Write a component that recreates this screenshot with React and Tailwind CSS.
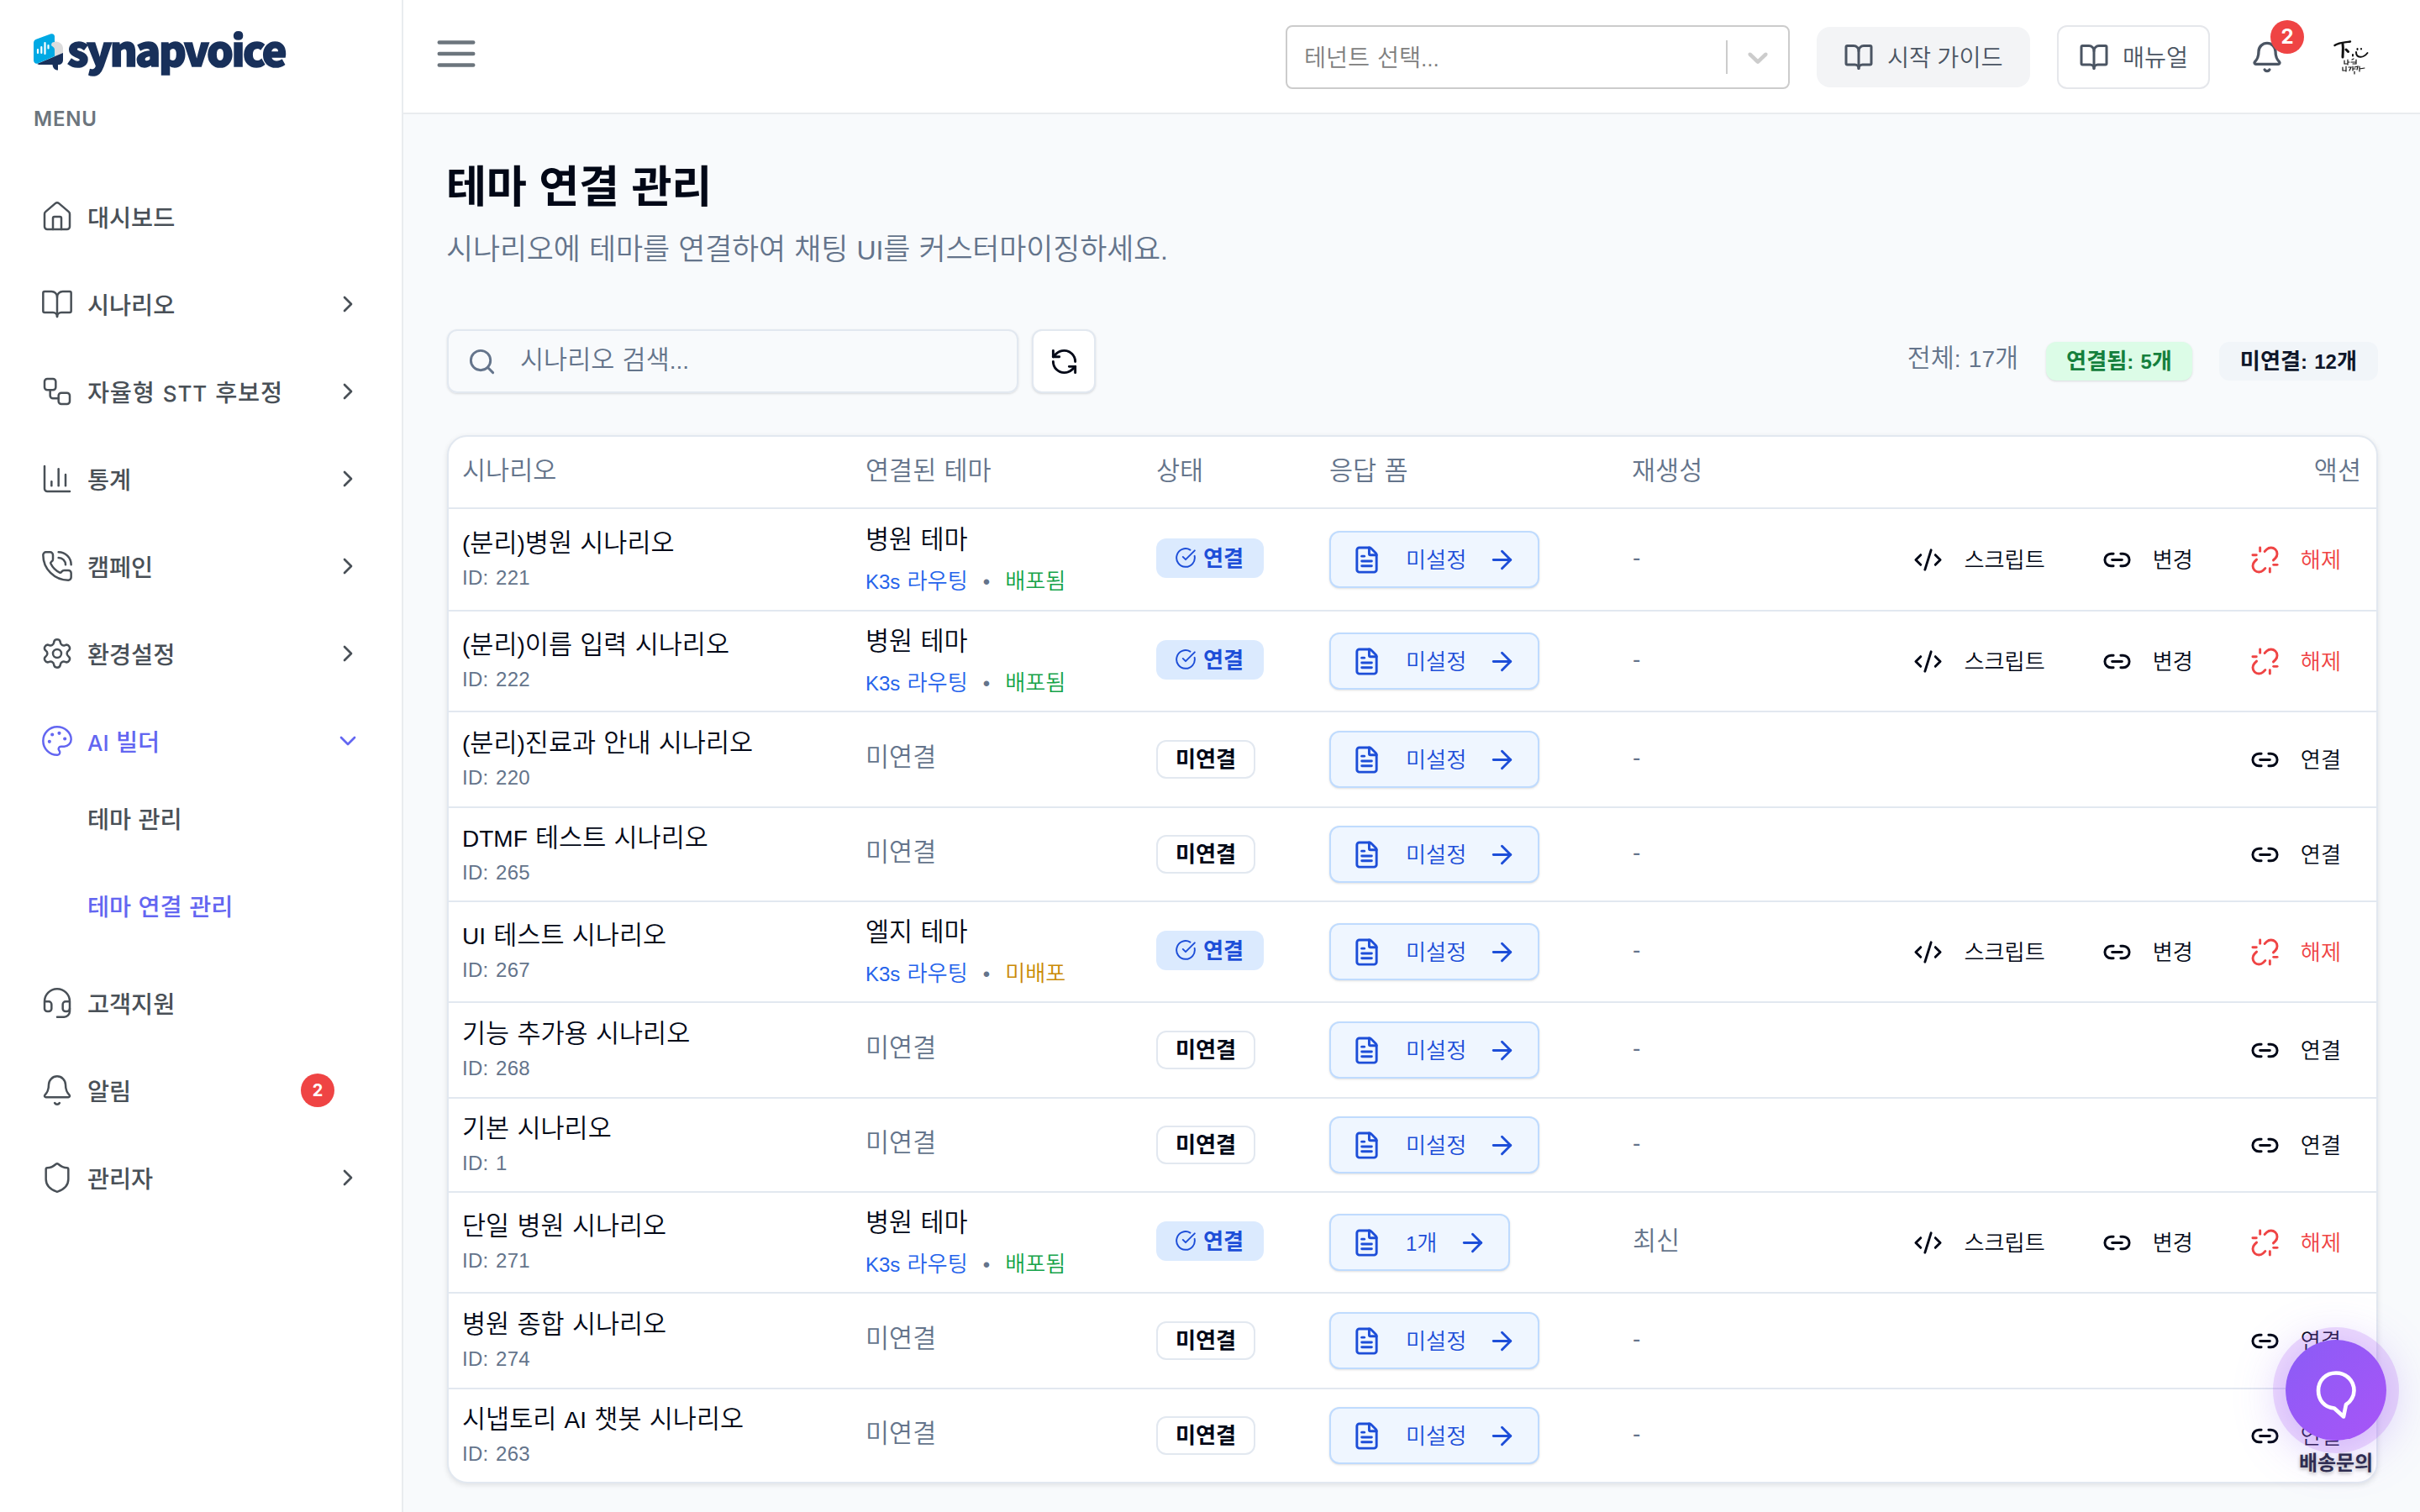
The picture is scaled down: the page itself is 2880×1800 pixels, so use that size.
import {
  ArrowRight,
  Bell,
  BookOpen,
  ChartColumn,
  ChevronDown,
  ChevronRight,
  CircleCheckBig,
  CodeXml,
  FileText,
  Headset,
  House,
  Link2,
  Palette,
  PhoneCall,
  RefreshCcw,
  Search,
  Settings,
  Shield,
  Unlink,
  Workflow,
} from "lucide-react";

const menuItems = [
  { label: "대시보드", icon: House },
  { label: "시나리오", icon: BookOpen, arrow: true },
  { label: "자율형 STT 후보정", icon: Workflow, arrow: true, spaced: true },
  { label: "통계", icon: ChartColumn, arrow: true },
  { label: "캠페인", icon: PhoneCall, arrow: true },
  { label: "환경설정", icon: Settings, arrow: true },
  { label: "AI 빌더", icon: Palette, open: true, children: ["테마 관리", "테마 연결 관리"] },
  { label: "고객지원", icon: Headset },
  { label: "알림", icon: Bell, badge: 2 },
  { label: "관리자", icon: Shield, arrow: true },
];

const rows = [
  { id: 221, name: "(분리)병원 시나리오", theme: "병원 테마", deployed: true, form: "미설정", regen: "-", height: "h-[122px]" },
  { id: 222, name: "(분리)이름 입력 시나리오", theme: "병원 테마", deployed: true, form: "미설정", regen: "-", height: "h-[120px]" },
  { id: 220, name: "(분리)진료과 안내 시나리오", form: "미설정", regen: "-", height: "h-[114px]" },
  { id: 265, name: "DTMF 테스트 시나리오", form: "미설정", regen: "-", height: "h-[112px]" },
  { id: 267, name: "UI 테스트 시나리오", theme: "엘지 테마", deployed: false, form: "미설정", regen: "-", height: "h-[120px]" },
  { id: 268, name: "기능 추가용 시나리오", form: "미설정", regen: "-", height: "h-[114px]" },
  { id: 1, name: "기본 시나리오", form: "미설정", regen: "-", height: "h-[112px]" },
  { id: 271, name: "단일 병원 시나리오", theme: "병원 테마", deployed: true, form: "1개", regen: "최신", height: "h-[120px]" },
  { id: 274, name: "병원 종합 시나리오", form: "미설정", regen: "-", height: "h-[114px]" },
  { id: 263, name: "시냅토리 AI 챗봇 시나리오", form: "미설정", regen: "-", height: "h-[110px]" },
];

const columns = "grid grid-cols-[480px_346px_206px_360px_200px_1fr] px-4";

function Ko({ children }) {
  return String(children)
    .split(/([가-힣]+)/)
    .map((part, i) =>
      i % 2 ? (
        <span key={i} className="text-[1.09em] leading-none">
          {part}
        </span>
      ) : (
        part
      )
    );
}

function Logo() {
  return (
    <div className="flex h-[44px] items-center">
      <svg width="36" height="44" viewBox="0 0 36 44" className="shrink-0">
        <path d="M21 11c3-3 14-2 14 7v7L24 28z" fill="#dcdcdd" />
        <path d="M4 36 35 23v8c0 4-2 6-6 6v6.5c-4 0-6-2.500-6.500-6.500H8c-2 0-3-.5-4-1z" fill="#18305a" />
        <path d="M0 11c0-2 1-3.500 3-4.300L20 .5c3-1 5 .5 5 3V10c-3 0-4.500 2-3.500 4.500 1 1 3.500 2 3.500 5V27L5 35.500c-3 .8-5-1-5-4z" fill="#00a9e4" />
        <path d="M5 19v4M9.300 16v7M13.500 11v13M17.500 14v3.500" stroke="#fff" strokeWidth="2.200" strokeLinecap="round" />
      </svg>
      <span className="-mt-[11px] ml-[4px] font-['Noto_Sans_CJK_KR','Noto_Sans',sans-serif] text-[50px] leading-[44px] font-black tracking-[-2.5px] text-[#18305a] [-webkit-text-stroke:1.6px_#18305a]">
        synapvoice
      </span>
    </div>
  );
}

function Sidebar() {
  return (
    <aside className="flex w-[480px] shrink-0 flex-col border-r-2 border-[#e9ecef] bg-white px-10 pt-10 font-['Inter','Noto_Sans_CJK_KR',sans-serif]">
      <Logo />
      <p className="mt-[44px] text-2xl leading-7 font-semibold tracking-[0.8px] text-[#6c757d]">MENU</p>
      <nav className="mt-[50px] flex flex-col text-[26px] font-medium text-[#495057]">
        {menuItems.map((item) => (
          <div key={item.label}>
            <div className={`flex h-[104px] items-center px-2 ${item.open ? "text-[#6366f1]" : ""}`}>
              <item.icon size={40} strokeWidth={1.5} />
              <span className={`ml-4 flex-1 pt-1 ${item.spaced ? "tracking-[0.8px]" : ""}`}>
                <Ko>{item.label}</Ko>
              </span>
              {item.badge && (
                <span className="mr-8 flex size-10 items-center justify-center rounded-full bg-[#ef4444] text-xl font-bold text-white">
                  {item.badge}
                </span>
              )}
              {item.arrow && <ChevronRight size={32} />}
              {item.open && <ChevronDown size={32} />}
            </div>
            {item.children && (
              <div className="-mt-[11px] mb-[11px] flex flex-col pl-16">
                {item.children.map((child, i) => (
                  <div key={child} className={`flex h-[104px] items-center pt-0.5 ${i === 1 ? "text-[#6366f1]" : ""}`}>
                    <span>
                      <Ko>{child}</Ko>
                    </span>
                  </div>
                ))}
              </div>
            )}
          </div>
        ))}
      </nav>
    </aside>
  );
}

function Avatar() {
  return (
    <svg width="72" height="64" viewBox="0 0 72 64" fill="none" stroke="#111" strokeLinecap="round" className="shrink-0">
      <path d="M14.500 19C20 15 27 15.500 33 14.500" strokeWidth="2.400" />
      <path d="M24 17c1 6 0 11 0 16" strokeWidth="3" />
      <path d="m28 24 2.500 2.500" strokeWidth="3" />
      <path d="M36 30v1.500M40 27c0 7 8 8 13.500 1M41.500 23v1M46 23v.5" strokeWidth="2" />
      <path d="M26 37v4h3M30 36v6M30 39h2M35 36l2-1M34 39h5M36 41h3M40 36v5" strokeWidth="1.200" />
      <path d="M24 45v4h3M28 44v6M31 45l3 0-2 4M36 44v5M36 47h3M38 45l4-1-1 4M44 44v6M44 47l6-1M38 50v3" strokeWidth="1.200" />
    </svg>
  );
}

function Header() {
  return (
    <header className="flex h-[136px] shrink-0 items-center border-b-2 border-[#e9ecef] bg-white pr-[44px] pl-[36px] text-[26px] text-[#4b5563]">
      <svg width="54" height="54" viewBox="0 0 24 24" stroke="#6c757d" strokeWidth="2" strokeLinecap="round" className="-mt-[7px]">
        <path d="M3 6h18M3 12h18M3 18h18" />
      </svg>
      <div className="mt-0.5 ml-auto flex h-[76px] w-[600px] items-center rounded-lg border-2 border-[#ccc] bg-white pl-5 text-[#808080]">
        <span className="flex-1 pt-1">
          <Ko>테넌트 선택...</Ko>
        </span>
        <span className="h-10 w-0.5 bg-[#ccc]" />
        <svg width="40" height="40" viewBox="0 0 20 20" fill="#ccc" className="mx-4">
          <path d="M4.516 7.548c0.436-0.446 1.043-0.481 1.576 0l3.908 3.747 3.908-3.747c0.533-0.481 1.141-0.446 1.574 0 0.436 0.445 0.408 1.197 0 1.615-0.406 0.418-4.695 4.502-4.695 4.502-0.217 0.223-0.502 0.335-0.787 0.335s-0.570-0.112-0.789-0.335c0 0-4.287-4.084-4.695-4.502s-0.436-1.170 0-1.615z" />
        </svg>
      </div>
      <button className="mt-0.5 ml-8 flex h-[72px] w-[254px] items-center gap-4 rounded-2xl bg-[#f3f4f6] pl-8">
        <BookOpen size={36} />
        <span className="pt-1">
          <Ko>시작 가이드</Ko>
        </span>
      </button>
      <button className="mt-0.5 ml-8 flex h-[76px] w-[182px] items-center gap-4 rounded-xl border-2 border-[#e5e7eb] bg-white pl-6">
        <BookOpen size={36} />
        <span className="pt-1">
          <Ko>매뉴얼</Ko>
        </span>
      </button>
      <div className="relative mt-0.5 mr-[46px] ml-12">
        <Bell size={40} />
        <span className="absolute -top-6 left-6 flex size-10 items-center justify-center rounded-full bg-[#ef4444] font-['Inter'] text-2xl font-bold text-white">
          2
        </span>
      </div>
      <Avatar />
    </header>
  );
}

function StatusBadge({ linked }) {
  if (linked) {
    return (
      <span className="-mt-1 flex h-[47px] w-[128px] items-center gap-2 rounded-xl bg-[#dbeafe] pl-[22px] text-2xl font-bold text-[#1d4ed8]">
        <CircleCheckBig size={26} strokeWidth={1.8} />
        <span className="pt-[3px]">
          <Ko>연결</Ko>
        </span>
      </span>
    );
  }
  return (
    <span className="-mt-px flex h-[46px] w-[118px] items-center justify-center rounded-xl border-2 border-[#e2e8f0] pt-0.5 text-2xl font-bold">
      <span>
        <Ko>미연결</Ko>
      </span>
    </span>
  );
}

function FormButton({ label }) {
  return (
    <button className="flex h-[68px] items-center rounded-xl border-2 border-[#bfdbfe] bg-[#eff6ff] px-[25px] text-2xl text-[#1d4ed8] shadow-sm">
      <FileText size={35} />
      <span className="mr-[25px] ml-[29px] pt-1">
        <Ko>{label}</Ko>
      </span>
      <ArrowRight size={35} />
    </button>
  );
}

function ActionButton({ icon: Icon, label, danger }) {
  return (
    <button className={`flex items-center gap-[25px] px-[26px] text-2xl ${danger ? "text-[#ef4444]" : ""}`}>
      <Icon size={35} />
      <span className="pt-1">
        <Ko>{label}</Ko>
      </span>
    </button>
  );
}

function ScenarioRow({ row, last }) {
  const linked = Boolean(row.theme);

  return (
    <div className={`${columns} ${row.height} items-center ${last ? "" : "border-b-2 border-[#e2e8f0]"}`}>
      <div className="pt-[3px]">
        <p className="leading-10">
          <Ko>{row.name}</Ko>
        </p>
        <p className="text-2xl leading-10 tracking-[0.3px] text-[#64748b]">ID: {row.id}</p>
      </div>
      {linked ? (
        <div className="pt-1">
          <p className="leading-10">
            <Ko>{row.theme}</Ko>
          </p>
          <p className="mt-[9px] flex gap-[18px] text-2xl leading-10">
            <span className="text-[#2563eb]">
              <Ko>K3s 라우팅</Ko>
            </span>
            <span className="text-[#64748b]">•</span>
            <span className={row.deployed ? "text-[#16a34a]" : "text-[#ca8a04]"}>
              <Ko>{row.deployed ? "배포됨" : "미배포"}</Ko>
            </span>
          </p>
        </div>
      ) : (
        <p className="-mt-0.5 text-[#64748b]">
          <Ko>미연결</Ko>
        </p>
      )}
      <StatusBadge linked={linked} />
      <div className="flex">
        <FormButton label={row.form} />
      </div>
      <p className={`pl-px text-[#64748b] ${row.regen === "-" ? "-mt-1" : ""}`}>
        <Ko>{row.regen}</Ko>
      </p>
      <div className="flex justify-end gap-4">
        {linked ? (
          <>
            <ActionButton icon={CodeXml} label="스크립트" />
            <ActionButton icon={Link2} label="변경" />
            <ActionButton icon={Unlink} label="해제" danger />
          </>
        ) : (
          <ActionButton icon={Link2} label="연결" />
        )}
      </div>
    </div>
  );
}

function ScenarioTable() {
  return (
    <div className="mt-[50px] flex flex-col rounded-3xl border-2 border-[#e2e8f0] bg-white shadow-[0_2px_6px_rgba(0,0,0,0.1)]">
      <div className={`${columns} h-[86px] items-center border-b-2 border-[#e2e8f0] text-[#64748b]`}>
        {["시나리오", "연결된 테마", "상태", "응답 폼", "재생성"].map((title) => (
          <span key={title}>
            <Ko>{title}</Ko>
          </span>
        ))}
        <span className="pr-0.5 text-right">
          <Ko>액션</Ko>
        </span>
      </div>
      {rows.map((row, i) => (
        <ScenarioRow key={row.id} row={row} last={i === rows.length - 1} />
      ))}
    </div>
  );
}

function InquiryButton() {
  return (
    <div className="absolute top-[1595px] right-10 flex w-[120px] flex-col items-center">
      <button className="flex size-[120px] items-center justify-center rounded-full bg-linear-135/srgb from-[#8b5cf6] to-[#a855f7] shadow-[0_0_0_15px_rgba(168,85,247,0.2),0_8px_60px_rgba(139,92,246,0.4)]">
        <svg width="60" height="60" viewBox="0 0 60 60" fill="none" stroke="#fff" strokeWidth="4.600" strokeLinejoin="round" className="overflow-visible">
          <path d="M28 51.500C16 50.500 9 41.500 9 30.500 9 18 18 9.500 30 9.500s21.500 9 21.500 21c0 6-3.500 13-9.500 16.500L39 61.500 28 51.500z" />
        </svg>
      </button>
      <span className="mt-[12px] text-[22px] leading-[32px] font-semibold whitespace-nowrap text-[#2f2d52] [text-shadow:0_2px_4px_rgba(0,0,0,0.3)]">
        <Ko>배송문의</Ko>
      </span>
    </div>
  );
}

export default function App() {
  return (
    <div className="relative flex h-[1800px] w-[2880px] overflow-hidden bg-[#f8fafc] font-['Liberation_Sans','Noto_Sans_CJK_KR',sans-serif] text-[28px] font-[350] text-[#020817] [word-spacing:1.5px]">
      <Sidebar />
      <div className="flex min-w-0 flex-1 flex-col">
        <Header />
        <main className="flex flex-col pt-[53px] pr-[50px] pl-[52px]">
          <h1 className="-ml-px text-5xl leading-[72px] font-bold tracking-[-0.3px]">
            <Ko>테마 연결 관리</Ko>
          </h1>
          <p className="mt-[13px] -ml-px text-[32px] leading-[48px] tracking-[-0.13px] text-[#64748b]">
            <Ko>시나리오에 테마를 연결하여 채팅 UI를 커스터마이징하세요.</Ko>
          </p>
          <div className="mt-[70px] flex h-[76px] items-center">
            <div className="flex h-full w-[680px] items-center rounded-xl border-2 border-[#e2e8f0] pl-[22px] text-[#64748b] shadow-sm">
              <Search size={35} />
              <span className="ml-[28px]">
                <Ko>시나리오 검색...</Ko>
              </span>
            </div>
            <button className="ml-4 flex size-[76px] items-center justify-center rounded-xl border-2 border-[#e2e8f0] bg-white shadow-sm">
              <RefreshCcw size={35} />
            </button>
            <span className="-mt-1 ml-auto text-[#64748b]">
              <Ko>전체: 17개</Ko>
            </span>
            <span className="ml-[33px] flex h-[46px] items-center rounded-xl bg-[#dcfce7] px-6 text-2xl font-bold text-[#15803d] shadow">
              <span className="pt-0.5">
                <Ko>연결됨: 5개</Ko>
              </span>
            </span>
            <span className="ml-8 flex h-[46px] items-center rounded-xl bg-[#f1f5f9] px-[25px] text-2xl font-bold text-[#0f172a]">
              <span className="pt-0.5">
                <Ko>미연결: 12개</Ko>
              </span>
            </span>
          </div>
          <ScenarioTable />
        </main>
      </div>
      <InquiryButton />
    </div>
  );
}
